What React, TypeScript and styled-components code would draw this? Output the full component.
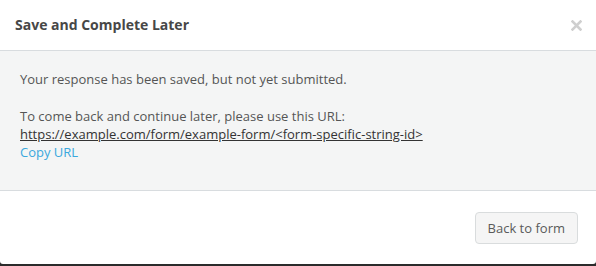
import React from 'react';
import styled, { createGlobalStyle } from 'styled-components';

const GlobalStyle = createGlobalStyle`
  html, body {
    margin: 0;
    padding: 0;
    background: #2b2b2b;
  }
  body {
    font-family: 'Open Sans', 'Liberation Sans', sans-serif;
  }
`;

const Modal = styled.div`
  width: 596px;
  height: 264px;
  background: #ffffff;
  border-radius: 0 0 3px 3px;
  display: flex;
  flex-direction: column;
  overflow: hidden;
`;

const Header = styled.div`
  display: flex;
  align-items: center;
  justify-content: space-between;
  padding: 15px 14px 15px 15px;
  border-bottom: 1px solid #d8dcdf;
`;

const Title = styled.h4`
  margin: 0;
  font-size: 14px;
  line-height: 20px;
  font-weight: 700;
  color: #474747;
`;

const CloseButton = styled.button`
  border: 0;
  padding: 0;
  background: transparent;
  width: 11px;
  height: 11px;
  display: flex;
  cursor: pointer;
`;

const Body = styled.div`
  flex: 1;
  background: #f4f5f5;
  padding: 19px 20px 0;
  border-bottom: 1px solid #d8dcdf;
  font-size: 13px;
  line-height: 18px;
  color: #555555;
`;

const Paragraph = styled.p`
  margin: 0 0 19px;
`;

const Url = styled.a`
  color: #333333;
  text-decoration: underline;
`;

const LinkButton = styled.a`
  display: block;
  color: #3aa8dd;
  text-decoration: none;
  cursor: pointer;
`;

const Footer = styled.div`
  display: flex;
  justify-content: flex-end;
  padding: 21px 18px 20px;
`;

const Button = styled.button`
  height: 32px;
  padding: 0 12px;
  font-family: 'Open Sans', 'Liberation Sans', sans-serif;
  font-size: 13px;
  color: #5a5a5a;
  background: #f5f5f5;
  border: 1px solid #d9dcdd;
  border-radius: 4px;
  cursor: pointer;
`;

const App: React.FC = () => {
  const url = 'https://example.com/form/example-form/<form-specific-string-id>';

  return (
    <>
      <GlobalStyle />
      <Modal>
        <Header>
          <Title>Save and Complete Later</Title>
          <CloseButton aria-label="Close">
            <svg width="11" height="11" viewBox="0 0 11 11">
              <path d="M1.5 1.5 L9.5 9.5 M9.5 1.5 L1.5 9.5" stroke="#cfcfcf" strokeWidth="2.6" strokeLinecap="square" />
            </svg>
          </CloseButton>
        </Header>
        <Body>
          <Paragraph>Your response has been saved, but not yet submitted.</Paragraph>
          <div>To come back and continue later, please use this URL:</div>
          <Url href="#">{url}</Url>
          <LinkButton>Copy URL</LinkButton>
        </Body>
        <Footer>
          <Button>Back to form</Button>
        </Footer>
      </Modal>
    </>
  );
};

export default App;
